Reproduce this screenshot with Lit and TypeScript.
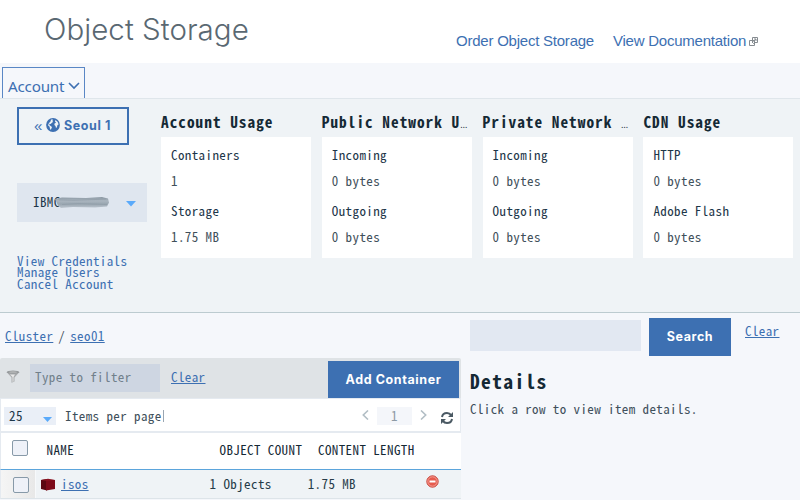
import { LitElement, html, css, svg } from "lit";
import { customElement } from "lit/decorators.js";

const usage = [
  { title: "Account Usage", more: false, rows: [["Containers", "1"], ["Storage", "1.75 MB"]] },
  { title: "Public Network U", more: true, rows: [["Incoming", "0 bytes"], ["Outgoing", "0 bytes"]] },
  { title: "Private Network ", more: true, rows: [["Incoming", "0 bytes"], ["Outgoing", "0 bytes"]] },
  { title: "CDN Usage", more: false, rows: [["HTTP", "0 bytes"], ["Adobe Flash", "0 bytes"]] },
];

const chevron = (d: string, w: number, h: number, cls: string) => html`
  <svg class=${cls} width=${w} height=${h} viewBox="0 0 ${w} ${h}" fill="none" stroke="currentColor" stroke-width="1.6">${svg`<path d=${d} />`}</svg>`;

@customElement("app-root")
export class AppRoot extends LitElement {
  static styles = css`
    :host {
      display: block; width: 800px; height: 500px; overflow: hidden; background: #f5f7fb; color: #3f505b;
      font: 13px/18px "Noto Sans Mono CJK SC", "Noto Sans Mono CJK JP", "DejaVu Sans Mono", monospace;
      letter-spacing: 0.4px; white-space: nowrap;
    }
    * { box-sizing: border-box; }
    svg { display: block; flex: none; }
    a { color: #3d70b2; }
    .header { height: 63px; background: #fff; display: flex; padding-left: 44px; font-family: "Liberation Sans", sans-serif; }
    h1 { margin: 9px 0 0; width: 412px; font: 300 29.5px/40px Inter, sans-serif; letter-spacing: 0.05px; color: #5a6872; }
    .header a { font-size: 15px; line-height: 20px; letter-spacing: -0.23px; margin-top: 31px; text-decoration: none; }
    .header .docs { margin-left: 19px; }
    .ext { margin: 37px 0 0 3px; }
    .tabs { height: 36px; border-bottom: 1px solid #dfe6eb; padding: 4px 0 0 2px; }
    .tab { width: 83px; height: 31px; border: 1px solid #5a87c5; border-bottom: 0; color: #3d70b2; display: flex; padding: 8px 0 0 5px; font: 15.2px/20px "Noto Sans", sans-serif; letter-spacing: -0.2px; }
    .tab svg { margin: 5px 0 0 4px; }
    .account { height: 214px; background: #eff3f6; border-bottom: 1px solid #bccbd0; padding: 8px 0 0 17px; display: flex; }
    .side { width: 144px; }
    .seoul { width: 112px; height: 38px; border: 2px solid #3d70b2; color: #3d70b2; display: flex; align-items: center; padding-left: 15px; font: 700 12.5px/18px Inter, sans-serif; letter-spacing: 0.6px; }
    .seoul svg { margin: 0 4px 2px 0; }
    .seoul .back { font: 15px/18px "Liberation Sans", sans-serif; margin: -1px 3px 0 0; }
    .user { margin-top: 38px; width: 130px; height: 39px; background: #dfe6ef; color: #1d3649; display: flex; align-items: center; justify-content: space-between; padding: 0 11px 0 16px; position: relative; }
    .user span { margin-top: -2px; }
    .smudge { position: absolute; left: 35px; top: 13px; }
    .arrow { margin-top: 3px; color: #5aaafa; }
    .links { margin-top: 33px; display: grid; line-height: 11.4px; }
    .links a { text-decoration: none; }
    .cards { display: grid; grid-template-columns: repeat(4, 150px); column-gap: 10.8px; }
    h2 { margin: 4px 0 6px; width: 150px; font-size: 15.3px; line-height: 20px; font-weight: 700; letter-spacing: 1px; color: #152935; white-space: pre; }
    h2 span { font: 400 9px/10px "Noto Sans", sans-serif; letter-spacing: 0; }
    .card { background: #fff; height: 121px; padding: 9px 10px; }
    .key { color: #1d3649; margin-bottom: 8px; }
    .val { margin-bottom: 12px; }
    .body { display: flex; }
    .list { width: 461px; }
    .crumbs { height: 45px; padding: 14px 0 0 5px; display: flex; gap: 5px; }
    .filter { height: 40px; background: #dfe3e6; display: flex; border-radius: 2px 2px 0 0; }
    .filter .field { margin: 6px 11px 0 10px; width: 130px; height: 28px; background: #ced6e2; color: #71808b; padding: 4px 5px; }
    .filter a { margin-top: 10px; }
    .funnel { margin: 12px 0 0 6px; }
    .btn { background: #3d70b2; color: #fff; display: flex; align-items: center; justify-content: center; font: 700 12.5px/18px Inter, sans-serif; letter-spacing: 0.6px; }
    .add { width: 131px; height: 37px; margin: 3px 2px 0 auto; }
    .pager { height: 35px; background: #fff; border: 1px solid #e5eaf0; border-width: 1px 1px 2px; display: flex; }
    .size { width: 52px; height: 18px; background: #eaeff7; margin: 8px 0 0 3px; padding-left: 5px; color: #1d3649; display: flex; }
    .size svg { margin: 10px 0 0 20px; color: #5aaafa; }
    .per { margin: 8px 0 0 9px; }
    .caret { width: 1px; height: 12px; background: #9aa6b2; margin: 11px 0 0 1px; }
    .prev { margin: 11px 0 0 auto; color: #b2bec5; }
    .num { width: 35px; height: 18px; margin: 8px 8px 0; background: #f4f6fa; text-align: center; color: #8d9aa5; }
    .next { margin-top: 11px; color: #b2bec5; }
    .sync { margin: 12px 7px 0 14px; color: #4a5963; }
    .head { height: 37px; background: #fff; border-bottom: 1px solid #5ba5dc; border-left: 1px solid #e5eaf0; display: flex; color: #152935; padding: 8px 0 0 11px; }
    .box { display: block; width: 16px; height: 16px; border: 1px solid #8799a8; border-radius: 2px; background: #eef1f8; flex: none; }
    .head .box { margin-top: -1px; }
    .head .name { width: 173px; margin-left: 18.500px; }
    .head .objects { width: 83px; }
    .head .len { margin-left: 15.500px; }
    .row { height: 29px; background: #eff3f6; border-bottom: 1px solid #dde4e9; border-left: 1px solid #e5eaf0; display: flex; color: #263b48; }
    .sel { width: 35px; background: linear-gradient(90deg, #f5f5f5, #e8e8e8); border-right: 1px solid #f7f9fb; padding: 7px 0 0 12px; }
    .cube { margin: 8px 5px 0 4px; }
    .row a, .row span { margin-top: 5px; }
    .count { margin-left: 121px; }
    .bytes { margin-left: 36px; }
    .del { margin: 5px 0 0 70px; }
    .details { padding-left: 9px; }
    .search { display: flex; height: 53px; }
    .query { width: 171px; height: 31px; margin-top: 7px; background: #e2e8f2; }
    .go { width: 82px; height: 38px; margin: 5px 14px 0 8px; }
    .search a { margin-top: 9px; }
    .details h3 { margin: 1px 0 0; font-size: 19.6px; letter-spacing: 1.3px; line-height: 28px; color: #152935; }
    .details p { margin: 5px 0 0; }
  `;

  render() {
    return html`
      <header class="header"><h1>Object Storage</h1><a>Order Object Storage</a><a class="docs">View Documentation</a>
        <svg class="ext" width="9" height="9" viewBox="0 0 9 9" fill="#fff" stroke="#858b90" stroke-width="1"><path d="M.5 3.5h5v5h-5zM3.5.5h5v5h-3l-1 1-1.5-1.5 1-1h-.5zM4.5 4.5 6.8 2.2M5 2h2v2" /></svg></header>
      <nav class="tabs"><div class="tab">Account${chevron("M1 2 6 7 11 2", 12, 9, "")}</div></nav>
      <section class="account">
        <div class="side">
          <div class="seoul"><span class="back">«</span>
            <svg width="14" height="14" viewBox="0 0 14 14"><circle cx="7" cy="7" r="6.900" fill="#3d70b2" /><path fill="#eff3f6" d="M5 1.500 7 1.500 6.500 3 7 4 5.600 5 4.800 6 3.500 5.800 3.300 7 4.600 8 6 9 5.400 10.400 4.800 12 3.900 10.500 3.600 8.800 2 7.200 3 5 4.500 3.500ZM9.500 2 11.700 4 12.600 6.600 11.500 7 10.900 9.200 10 10 9.500 8 8.400 7 8.500 5.400 10 4.800 9 3.600Z" /></svg><span>Seoul 1</span></div>
          <div class="user"><span>IBMC</span>
            <svg class="smudge" width="60" height="14" viewBox="0 0 60 14"><defs><linearGradient id="smear" x2="0" y2="1"><stop stop-color="#8b98a3" /><stop offset=".35" stop-color="#aab5bf" /><stop offset=".65" stop-color="#99a6b0" /><stop offset="1" stop-color="#bdc6d0" /></linearGradient></defs><path fill="url(#smear)" d="M3 3 10 1.500 34 2 50 1l6 1.500 1 4-2 4-12 1-22-.5-12 1-3-2.500z" /><path fill="none" stroke="#71808c" stroke-opacity=".22" d="M7 4 22 4.500 54 3M10 8.500l16-1 29 1" /></svg>
            <svg class="arrow" width="10" height="6" viewBox="0 0 10 6"><path d="M0 0h10L5 5.500z" fill="currentColor" /></svg></div>
          <div class="links"><a>View Credentials</a><a>Manage Users</a><a>Cancel Account</a></div>
        </div>
        <div class="cards">${usage.map((u) => html`<div><h2>${u.title}${u.more ? html`<span>…</span>` : ""}</h2><div class="card">${u.rows.map(([k, v]) => html`<div class="key">${k}</div><div class="val">${v}</div>`)}</div></div>`)}</div>
      </section>
      <main class="body">
        <section class="list">
          <div class="crumbs"><a><u>Cluster</u></a><span>/</span><a><u>seo01</u></a></div>
          <div class="filter">
            <svg class="funnel" width="14" height="14" viewBox="0 0 14 14"><path fill="#a8abad" d="M.5 2 5.500 7.500v5.200l3-1.200v-4L13.500 2z" /><path fill="#e9e9e9" d="M4 4.500h5L7.500 7v4.500l-1 .4V7z" /><ellipse cx="7" cy="2.200" rx="6.300" ry="1.600" fill="#969a9c" /><ellipse cx="7" cy="2" rx="4" ry=".6" fill="#c8c8c8" /></svg>
            <div class="field">Type to filter</div><a><u>Clear</u></a><div class="btn add">Add Container</div>
          </div>
          <div class="pager">
            <div class="size">25<svg width="9" height="6" viewBox="0 0 9 6"><path d="M0 0h9L4.500 5z" fill="currentColor" /></svg></div>
            <span class="per">Items per page</span><i class="caret"></i>
            ${chevron("M6 .5 1.3 5 6 9.5", 7, 10, "prev")}<div class="num">1</div>${chevron("M1 .5 5.7 5 1 9.5", 7, 10, "next")}
            <svg class="sync" width="12" height="14" viewBox="0 0 12 14"><path fill="none" stroke="currentColor" stroke-width="2" d="M1 6C1.500 3 3 2 6 2c2 0 3.200.8 4.200 2.200M11 8c-.5 3-2 4-5 4-2 0-3.200-.8-4.200-2.200" /><path fill="currentColor" d="M12 1v5H7zM0 13V8h5z" /></svg>
          </div>
          <div class="head"><i class="box"></i><span class="name">NAME</span><span class="objects">OBJECT COUNT</span><span class="len">CONTENT LENGTH</span></div>
          <div class="row">
            <div class="sel"><i class="box"></i></div>
            <svg class="cube" width="16" height="13" viewBox="0 0 16 13"><path fill="#5b0812" d="M1 2 7 1v11.500L1 11z" /><path fill="#7d0b1a" d="M6 1.500 15 2v9l-9 1.500z" /><path fill="#8a1220" d="M1 2 8 .8l7 1.200-8 1z" /></svg>
            <a><u>isos</u></a><span class="count">1 Objects</span><span class="bytes">1.75 MB</span>
            <svg class="del" width="13" height="13" viewBox="0 0 13 13"><circle cx="6.500" cy="6.500" r="5.700" fill="#e65b4e" stroke="#c6473e" /><circle cx="6.500" cy="6.500" r="4.700" fill="none" stroke="#f6b0a7" stroke-width=".8" /><path fill="#fff" d="M3.500 5.500h6v2h-6z" /></svg>
          </div>
        </section>
        <section class="details">
          <div class="search"><div class="query"></div><div class="btn go">Search</div><a><u>Clear</u></a></div>
          <h3>Details</h3><p>Click a row to view item details.</p>
        </section>
      </main>`;
  }
}
